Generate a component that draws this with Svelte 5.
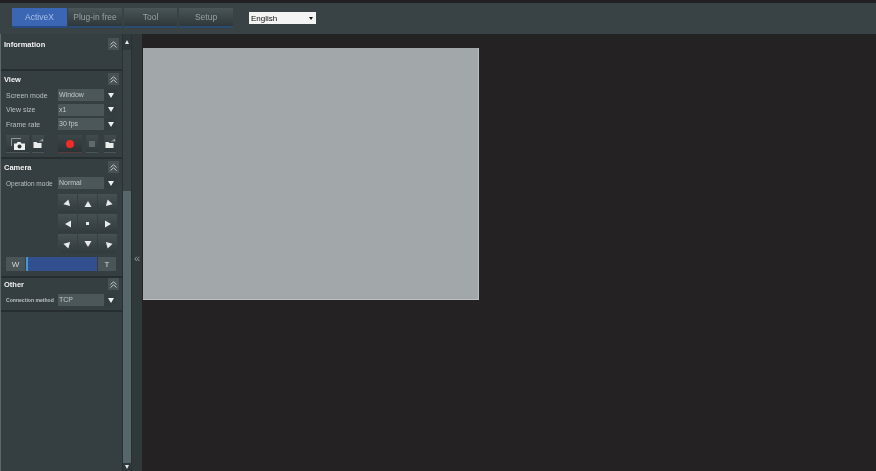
<script>
  const tabs = [
    { label: 'ActiveX', active: true, w: 55 },
    { label: 'Plug-in free', w: 54 },
    { label: 'Tool', w: 53 },
    { label: 'Setup', w: 54 }
  ];
  const pad = [
    { r: 135 }, { r: 0 }, { r: -135 },
    { r: -90 }, { dot: true }, { r: 90 },
    { r: 45 }, { r: 180 }, { r: -45 }
  ];
</script>

<div class="page">
  <div class="topstrip"></div>
  <header class="header">
    <nav class="tabs">
      {#each tabs as t}
        <button class="tab" class:active={t.active} style="width:{t.w}px">{t.label}</button>
      {/each}
    </nav>
    <div class="lang"><span>English</span><i class="lang-arrow"></i></div>
  </header>

  <div class="body">
    <aside class="side">
      <section class="sec info">
        <div class="title"><h2>Information</h2>{@render collapse()}</div>
      </section>

      <section class="sec view">
        <div class="title"><h2>View</h2>{@render collapse()}</div>
        {@render row('Screen mode', 'Window')}
        {@render row('View size', 'x1')}
        {@render row('Frame rate', '30 fps')}
        <div class="tools">
          <button class="tool cam" aria-label="Capture">
            <svg width="16" height="14" viewBox="0 0 16 14">
              <path d="M1.5 9V1.5H11" fill="none" stroke="#8f9899" stroke-width="1"/>
              <path d="M4 13V6.5h2.5l1-1.5h3l1 1.5H15V13z" fill="#eef0f0"/>
              <circle cx="9.5" cy="9.5" r="2" fill="#2d3537"/>
            </svg>
          </button>
          <button class="tool mini" aria-label="Open folder">{@render folder()}</button>
          <button class="tool rec" aria-label="Record"><i class="rec-dot"></i></button>
          <button class="tool mini stop" aria-label="Stop"><i class="stop-sq"></i></button>
          <button class="tool mini last" aria-label="Open folder">{@render folder()}</button>
        </div>
      </section>

      <section class="sec camera">
        <div class="title"><h2>Camera</h2>{@render collapse()}</div>
        {@render row('Operation mode', 'Normal')}
        <div class="pad">
          {#each pad as p}
            <button class="pad-btn" aria-label="Move">
              {#if p.dot}
                <i class="pad-dot"></i>
              {:else}
                <svg width="8" height="8" viewBox="0 0 8 8" style="transform:rotate({p.r}deg)">
                  <path d="M4 1 7.5 7H.5z" fill="#e6eaea"/>
                </svg>
              {/if}
            </button>
          {/each}
        </div>
        <div class="zoom">
          <button class="zbtn w">W</button>
          <div class="slider"><i class="knob"></i></div>
          <button class="zbtn t">T</button>
        </div>
      </section>

      <section class="sec other">
        <div class="title"><h2>Other</h2>{@render collapse()}</div>
        {@render row('Connection method', 'TCP', true)}
      </section>
    </aside>

    <div class="scroll">
      <div class="sbtn"><i class="tri up"></i></div>
      <div class="track"><div class="thumb"></div></div>
      <div class="sbtn bottom"><i class="tri down"></i></div>
    </div>

    <div class="strip"><span class="chev">«</span></div>

    <main class="main">
      <div class="video"></div>
    </main>
  </div>
</div>

{#snippet collapse()}
  <button class="collapse" aria-label="Collapse">
    <svg width="7" height="7" viewBox="0 0 7 7">
      <path d="M.5 3.5 3.5.8l3 2.7M.5 6.5l3-2.7 3 2.7" fill="none" stroke="#c3c9c9" stroke-width="1"/>
    </svg>
  </button>
{/snippet}

{#snippet folder()}
  <svg width="11" height="10" viewBox="0 0 11 10">
    <path d="M0.5 3h3l1 1h4v5h-8z" fill="#eceeee"/>
    <path d="M6.5 2.5 10 1M8.5.5 10 1l-.5 1.5" fill="none" stroke="#aeb5b6" stroke-width="0.8"/>
  </svg>
{/snippet}

{#snippet row(label, value, tiny = false)}
  <div class="row">
    <span class="label" class:tiny>{label}</span>
    <div class="box">{value}</div>
    <button class="arrow" aria-label="Open"><i class="tri down-big"></i></button>
  </div>
{/snippet}

<style>
  :global(body) {
    margin: 0;
    background: #242223;
    font-family: "Liberation Sans", Arial, sans-serif;
    overflow: hidden;
  }
  button {
    padding: 0;
    border: 0;
    font-family: inherit;
    display: flex;
    align-items: center;
    justify-content: center;
  }
  i { display: block; }

  .page {
    width: 876px;
    height: 471px;
    display: flex;
    flex-direction: column;
    overflow: hidden;
    filter: blur(0.35px);
  }
  .topstrip {
    height: 3px;
    background: #222021;
  }
  .header {
    height: 31px;
    background: #394245;
    display: flex;
    align-items: flex-start;
    padding-left: 12px;
    box-sizing: border-box;
  }
  .tabs {
    display: flex;
    gap: 2px;
    margin-top: 5px;
  }
  .tab {
    height: 20px;
    box-sizing: border-box;
    background: linear-gradient(#4a5557, #2f383a);
    border-bottom: 2px solid #2b4a70;
    color: #98a1a2;
    font-size: 8.5px;
  }
  .tab.active {
    background: #3a66b4;
    border-bottom-color: #2a4a86;
    color: #a8bfe8;
    margin-right: -1px;
  }
  .lang {
    width: 67px;
    height: 12px;
    margin: 9px 0 0 16px;
    background: #f4f4f4;
    color: #111;
    font-size: 8px;
    display: flex;
    align-items: center;
    justify-content: space-between;
    padding: 0 2px;
    box-sizing: border-box;
  }
  .lang-arrow {
    width: 0;
    height: 0;
    border: 2px solid transparent;
    border-top: 3px solid #111;
    border-bottom: 0;
    margin-right: 1px;
  }

  .body {
    flex: 1;
    display: flex;
    min-height: 0;
  }
  .side {
    width: 122px;
    background: #353e40;
    border-left: 1px solid #5c686a;
    box-sizing: border-box;
    display: flex;
    flex-direction: column;
  }
  .sec {
    border-bottom: 2px solid #272e30;
    padding: 0 5px 0 4px;
    box-sizing: border-box;
  }
  .info { height: 37px; }
  .view { height: 88px; }
  .camera { height: 119px; }
  .other { height: 34px; }
  .title {
    display: flex;
    justify-content: space-between;
    align-items: center;
    height: 14px;
    margin: 1px -2px 3px -1px;
  }
  .info .title { margin-top: 3px; }
  .other .title { margin-top: 0; height: 12px; margin-bottom: 4px; }
  h2 {
    margin: 0;
    font-size: 7.5px;
    font-weight: 700;
    color: #f0f2f2;
  }
  .collapse {
    width: 11px;
    height: 12px;
    background: #485254;
  }
  .row {
    display: flex;
    align-items: center;
    height: 12px;
    margin-bottom: 2.5px;
  }
  .label {
    width: 52px;
    flex: none;
    color: #b9c0c0;
    font-size: 7px;
    white-space: nowrap;
    margin-left: 1px;
  }
  .camera .label { font-size: 6.5px; }
  .label.tiny {
    font-size: 5.1px;
    font-weight: 700;
  }
  .box {
    width: 46px;
    height: 12px;
    background: #4c5759;
    color: #c2c8c8;
    font-size: 7px;
    line-height: 11px;
    padding-left: 1px;
    box-sizing: border-box;
  }
  .arrow {
    width: 11px;
    height: 12px;
    margin-left: 1px;
    background: #333c3e;
  }
  .tri.down-big {
    width: 0;
    height: 0;
    border-left: 3px solid transparent;
    border-right: 3px solid transparent;
    border-top: 5px solid #eef0f0;
  }
  .tools {
    display: flex;
    align-items: stretch;
    height: 18px;
    margin-top: 5px;
    margin-left: 1px;
  }
  .tool {
    background: linear-gradient(#414b4d, #303a3c);
    border-bottom: 1px solid #4b5557;
    box-sizing: border-box;
  }
  .cam { width: 23px; }
  .mini { width: 12px; margin-left: 3px; }
  .rec {
    width: 24px;
    margin-left: 14px;
    background: linear-gradient(#3c4547, #2c3335);
    border-bottom-color: #5a3a3c;
  }
  .stop { margin-left: 4px; }
  .last { margin-left: 6px; }
  .rec-dot {
    width: 8px;
    height: 8px;
    border-radius: 50%;
    background: #f22a2a;
  }
  .stop-sq {
    width: 6px;
    height: 6px;
    background: #5f6a6c;
  }

  .pad {
    display: grid;
    grid-template-columns: repeat(3, 19px);
    grid-auto-rows: 19px;
    gap: 1px;
    margin: 5px 0 0 53px;
  }
  .pad-btn { background: linear-gradient(#465153, #313a3c); }
  .pad-dot {
    width: 3px;
    height: 3px;
    background: #e6eaea;
  }
  .zoom {
    display: flex;
    height: 14px;
    margin: 4px 0 0 1px;
  }
  .zbtn {
    width: 19px;
    background: #4a5557;
    color: #d2d7d7;
    font-size: 8px;
  }
  .slider {
    width: 71px;
    margin: 0 1px;
    background: #33508e;
    position: relative;
  }
  .knob {
    position: absolute;
    left: 0;
    top: 0;
    width: 2px;
    height: 100%;
    background: #3f9ad8;
  }
  .t { width: 18px; }

  .scroll {
    width: 10px;
    background: #3a4447;
    border-left: 1px solid #2a3133;
    border-right: 1px solid #2a3133;
    box-sizing: border-box;
    display: flex;
    flex-direction: column;
  }
  .sbtn {
    height: 16px;
    display: flex;
    align-items: center;
    justify-content: center;
    background: #2f383a;
  }
  .sbtn.bottom { height: 8px; }
  .track {
    flex: 1;
    display: flex;
    flex-direction: column;
    justify-content: flex-end;
  }
  .thumb {
    height: 272px;
    background: #56666a;
  }
  .tri.up, .tri.down {
    width: 0;
    height: 0;
    border-left: 2px solid transparent;
    border-right: 2px solid transparent;
  }
  .tri.up { border-bottom: 4px solid #e8eaea; }
  .tri.down { border-top: 4px solid #e8eaea; }

  .strip {
    width: 10px;
    background: #30383a;
    display: flex;
    align-items: center;
    justify-content: center;
    padding-top: 11px;
    box-sizing: border-box;
  }
  .chev {
    color: #8e9799;
    font-size: 11px;
    line-height: 11px;
  }
  .main {
    flex: 1;
    background: #242223;
    padding: 14px 0 0 1px;
  }
  .video {
    width: 336px;
    height: 252px;
    background: #a2a7a9;
    box-shadow: inset 0 -1px 0 #bcc0c0, inset -1px 0 0 #bcc0c0;
  }
</style>
